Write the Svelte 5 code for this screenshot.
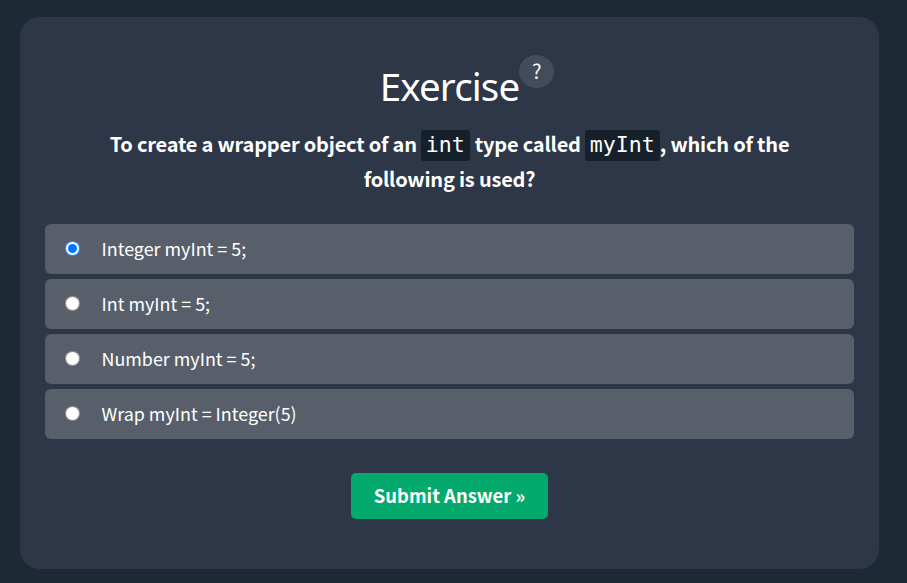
<script>
  const options = [
    'Integer myInt = 5;',
    'Int myInt = 5;',
    'Number myInt = 5;',
    'Wrap myInt = Integer(5)'
  ];
  let selected = $state(0);
</script>

<main>
  <section class="card">
    <h2><span class="title">Exercise</span><span class="help">?</span></h2>
    <div class="question">
      <div class="line"><span>To create a wrapper object of an</span><code>int</code><span class="after">type called</span><code>myInt</code><span>, which of the</span></div>
      <div class="line"><span>following is used?</span></div>
    </div>
    <form onsubmit={(e) => e.preventDefault()}>
      <div class="options">
        {#each options as option, i}
          <label class="option">
            <input type="radio" name="answer" value={i} bind:group={selected} />
            <span>{option}</span>
          </label>
        {/each}
      </div>
      <button type="submit">Submit Answer »</button>
    </form>
  </section>
</main>

<style>
  :global(body) {
    background: #1d2a35;
  }
  main {
    box-sizing: border-box;
    height: 583px;
    padding: 17px 28px 14px 20px;
    color: #fff;
    background: #1d2a35;
    font-family: 'Noto Sans CJK SC', 'Noto Sans', sans-serif;
    overflow: hidden;
  }
  .card {
    box-sizing: border-box;
    height: 552px;
    padding: 38px 25px 0;
    background: #2e3748;
    border-radius: 20px;
  }
  h2 {
    display: flex;
    justify-content: center;
    margin: 0;
    height: 72px;
    padding-left: 35px;
    font-weight: 400;
  }
  .title {
    padding-top: 3px;
    font-family: 'Noto Sans', 'Open Sans', sans-serif;
    font-size: 38.5px;
    line-height: 56px;
    letter-spacing: -0.85px;
  }
  .help {
    width: 35px;
    height: 33px;
    border-radius: 50%;
    background: #434c5b;
    font-size: 20px;
    line-height: 32px;
    text-align: center;
  }
  .question {
    font-size: 20px;
    font-weight: 700;
    letter-spacing: -0.2px;
  }
  .line {
    display: flex;
    justify-content: center;
    height: 35px;
    line-height: 33px;
    white-space: pre;
  }
  code {
    box-sizing: border-box;
    height: 31px;
    margin: 3px 0 0 4px;
    padding: 0 5px;
    border-radius: 3px;
    background: #15202a;
    font: 400 21.6px/29px 'DejaVu Sans Mono', monospace;
    letter-spacing: 0;
  }
  .after {
    margin-left: 5px;
  }
  .options {
    display: flex;
    flex-direction: column;
    gap: 5px;
    margin-top: 27px;
  }
  .option {
    display: flex;
    align-items: center;
    box-sizing: border-box;
    height: 50px;
    padding-left: 20px;
    border-radius: 6px;
    background: #585f6b;
    font-size: 17.9px;
    line-height: 48px;
  }
  .option span {
    height: 50px;
  }
  input {
    width: 15px;
    height: 15px;
    margin: 0 21.5px 1px 0;
  }
  button {
    display: block;
    width: 197px;
    height: 46px;
    margin: 34px auto 0;
    padding: 0 0 2px;
    border: 0;
    border-radius: 5px;
    background: #04aa6d;
    color: #fff;
    font: 700 18.4px/44px 'Noto Sans CJK SC', 'Noto Sans', sans-serif;
    white-space: nowrap;
  }
</style>
